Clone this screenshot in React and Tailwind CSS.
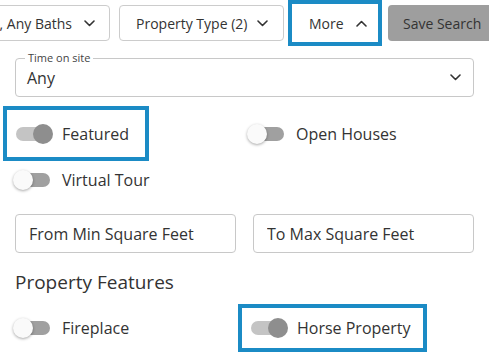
import { useState } from "react";

function Chevron({ up = false }) {
  return (
    <svg width="11" height="7" viewBox="0 0 11 7" fill="none" className="shrink-0">
      <path
        d={up ? "M1 6 L5.5 1.5 L10 6" : "M1 1 L5.5 5.5 L10 1"}
        stroke="#333"
        strokeWidth="1.6"
        strokeLinecap="round"
        strokeLinejoin="round"
      />
    </svg>
  );
}

function Toggle({ on }) {
  return (
    <span className="relative block w-[40px] h-[20px] shrink-0">
      <span
        className={
          "absolute left-[3px] top-[3px] w-[34px] h-[14px] rounded-full " +
          (on ? "bg-[#c4c4c4]" : "bg-[#a0a0a0]")
        }
      />
      <span
        className={
          "absolute top-0 w-5 h-5 rounded-full " +
          (on
            ? "left-[20px] bg-[#8e8e8e]"
            : "left-0 bg-[#fafafa] shadow-[0_1px_3px_rgba(0,0,0,0.35)]")
        }
      />
    </span>
  );
}

function SwitchItem({ label, on, highlight, className = "" }) {
  return (
    <div
      className={
        "flex items-center gap-[9px] " +
        (highlight ? "border-4 border-[#1b8bc5] pl-[6px] w-fit " : "") +
        className
      }
    >
      <Toggle on={on} />
      <span className="text-[16px] text-[#333]">{label}</span>
    </div>
  );
}

export default function App() {
  const [minSqft, setMinSqft] = useState("");
  const [maxSqft, setMaxSqft] = useState("");

  return (
    <div
      className="w-[489px] h-[354px] overflow-hidden bg-white text-[#333]"
      style={{ fontFamily: '"Open Sans", "Noto Sans", sans-serif' }}
    >
      <div className="flex items-center h-[46px] whitespace-nowrap">
        <button className="shrink-0 w-[170px] -ml-[60px] h-9 flex items-center justify-end gap-[12px] pr-[14px] border border-[#ccc] rounded-[4px] bg-white text-[14px]">
          Any Beds, Any Baths
          <Chevron />
        </button>
        <button className="shrink-0 ml-[9px] w-[165px] h-9 flex items-center gap-[10px] pl-4 border border-[#ccc] rounded-[4px] bg-white text-[14px]">
          Property Type (2)
          <Chevron />
        </button>
        <div className="shrink-0 ml-[4px] w-[94px] h-[46px] border-4 border-[#1b8bc5] bg-white flex items-center gap-[12px] pl-[17px] text-[14px]">
          More
          <Chevron up />
        </div>
        <button className="shrink-0 ml-[6px] h-9 flex items-center pl-[15px] pr-4 rounded-[4px] bg-[#9e9e9e] text-[14px] text-[#333]">
          Save Search
        </button>
      </div>

      <div className="px-[15px]">
        <div className="relative mt-[12px] h-[39px] border border-[#c8c8c8] rounded-[4px] flex items-center justify-between pl-[11px] pr-[12px]">
          <span className="absolute -top-[8px] left-[9px] bg-white px-[3px] text-[11px] leading-[14px] text-[#444]">
            Time on site
          </span>
          <span className="text-[16px] pt-[1px]">Any</span>
          <Chevron />
        </div>
      </div>

      <div className="px-[13px] mt-[9px] grid grid-cols-[234px_1fr]">
        <SwitchItem label="Featured" on highlight className="-ml-[10px] h-[55px] pr-[16px]" />
        <SwitchItem label="Open Houses" on={false} className="h-[55px]" />
        <SwitchItem label="Virtual Tour" on={false} className="h-[38px]" />
      </div>

      <div className="px-[15px] mt-[15px] grid grid-cols-2 gap-[17px]">
        <input
          value={minSqft}
          onChange={(e) => setMinSqft(e.target.value)}
          placeholder="From Min Square Feet"
          className="h-[39px] border border-[#c8c8c8] rounded-[4px] pl-[13px] text-[16px] outline-none placeholder:text-[#333]"
        />
        <input
          value={maxSqft}
          onChange={(e) => setMaxSqft(e.target.value)}
          placeholder="To Max Square Feet"
          className="h-[39px] border border-[#c8c8c8] rounded-[4px] pl-[13px] text-[16px] outline-none placeholder:text-[#333]"
        />
      </div>

      <h2 className="px-[15px] mt-[16px] text-[19px] leading-[26px] text-[#333]">
        Property Features
      </h2>

      <div className="px-[13px] mt-[9px] grid grid-cols-[235px_1fr]">
        <SwitchItem label="Fireplace" on={false} className="h-[48px]" />
        <SwitchItem label="Horse Property" on highlight className="-ml-[10px] h-[48px] pr-[12px]" />
      </div>
    </div>
  );
}
